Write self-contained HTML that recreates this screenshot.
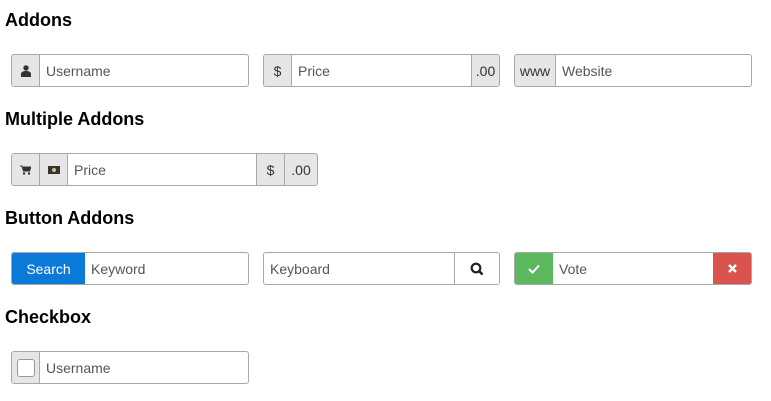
<!DOCTYPE html>
<html><head><meta charset="utf-8"><style>
body{margin:0;width:771px;height:401px;background:#fff;font-family:"Liberation Sans",sans-serif;position:relative;overflow:hidden}
h3{position:absolute;left:5px;margin:0;font-size:18px;font-weight:bold;color:#000}
.g{position:absolute;height:33px;box-sizing:border-box;border:1px solid #a8a8a8;border-radius:3px;display:flex;overflow:hidden;background:#fff}
.a{background:#e6e6e6;border-right:1px solid #a8a8a8;display:flex;align-items:center;justify-content:center;font-size:14px;color:#333;flex:none}
.ar{border-right:none;border-left:1px solid #a8a8a8}
.i{flex:1;display:flex;align-items:center;padding-left:6px;font-size:14px;color:#555}
</style></head><body>
<h3 style="top:10px">Addons</h3>
<div class="g" style="left:11px;top:54px;width:238px"><div class="a" style="width:27px"><svg width="10" height="12" viewBox="0 0 10 12"><circle cx="5" cy="3" r="2.7" fill="#333"/><path d="M0 12V9c0-2 2-3 5-3s5 1 5 3v3z" fill="#333"/></svg></div><div class="i">Username</div></div>
<div class="g" style="left:263px;top:54px;width:237px"><div class="a" style="width:27px">$</div><div class="i">Price</div><div class="a ar" style="width:27px">.00</div></div>
<div class="g" style="left:514px;top:54px;width:238px"><div class="a" style="width:40px">www</div><div class="i">Website</div></div>
<h3 style="top:109px">Multiple Addons</h3>
<div class="g" style="left:11px;top:153px;width:307px"><div class="a" style="width:27px"><svg width="11" height="10" viewBox="0 0 11 10"><path d="M0 1h2l1.5 5h6L11 2H3" fill="#333" stroke="#333"/><circle cx="4" cy="8.5" r="1.2" fill="#333"/><circle cx="9" cy="8.5" r="1.2" fill="#333"/></svg></div><div class="a" style="width:27px"><svg width="12" height="8" viewBox="0 0 12 8"><rect width="12" height="8" fill="#333"/><circle cx="6" cy="4" r="2" fill="#e6c070"/></svg></div><div class="i">Price</div><div class="a ar" style="width:27px">$</div><div class="a ar" style="width:32px">.00</div></div>
<h3 style="top:208px">Button Addons</h3>
<div class="g" style="left:11px;top:252px;width:238px"><div class="a" style="width:73px;background:#0a7ad8;color:#fff;border-right:none">Search</div><div class="i">Keyword</div></div>
<div class="g" style="left:263px;top:252px;width:237px"><div class="i">Keyboard</div><div class="a ar" style="width:44px;background:#fff"><svg width="14" height="14" viewBox="0 0 14 14"><circle cx="6" cy="6" r="4.3" fill="none" stroke="#222" stroke-width="2.2"/><path d="M9 9l3.5 3.5" stroke="#222" stroke-width="2.6"/></svg></div></div>
<div class="g" style="left:514px;top:252px;width:238px"><div class="a" style="width:38px;background:#5cb85c;border-right:none"><svg width="12" height="10" viewBox="0 0 12 10"><path d="M1 5l3.5 3.5L11 1.5" fill="none" stroke="#fff" stroke-width="2"/></svg></div><div class="i">Vote</div><div class="a" style="width:38px;background:#d9534f;border-right:none"><svg width="9" height="9" viewBox="0 0 9 9"><path d="M1 1l7 7M8 1l-7 7" stroke="#fff" stroke-width="2.4"/></svg></div></div>
<h3 style="top:307px">Checkbox</h3>
<div class="g" style="left:11px;top:351px;width:238px"><div class="a" style="width:27px"><div style="width:18px;height:18px;box-sizing:border-box;border:1px solid #999;border-radius:3px;background:#fff"></div></div><div class="i">Username</div></div>
</body></html>
